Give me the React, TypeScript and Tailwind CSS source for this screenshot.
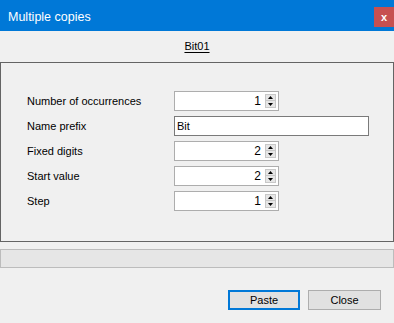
import React from "react";

const FONT = { fontFamily: '"Liberation Sans", Arial, sans-serif' };

const Spinner = () => (
  <div className="flex h-[14px] w-[11px] flex-col border border-[#c8c8c8] bg-[#e6e6e6]">
    <div className="flex h-1/2 items-center justify-center border-b border-[#c8c8c8]">
      <svg width="5" height="3" viewBox="0 0 5 3">
        <path d="M2.5 0 L5 3 L0 3 Z" fill="#000" />
      </svg>
    </div>
    <div className="flex h-1/2 items-center justify-center">
      <svg width="5" height="3" viewBox="0 0 5 3">
        <path d="M0 0 L5 0 L2.5 3 Z" fill="#000" />
      </svg>
    </div>
  </div>
);

const NumberField = ({ value }: { value: string }) => (
  <div className="flex h-[20px] w-[105px] items-center justify-end gap-[4px] border border-[#adadad] bg-white pr-[2px]">
    <span className="text-[12px] leading-none text-black">{value}</span>
    <Spinner />
  </div>
);

const ROWS = [
  { label: "Number of occurrences", value: "1" },
  { label: "Name prefix", text: "Bit" },
  { label: "Fixed digits", value: "2" },
  { label: "Start value", value: "2" },
  { label: "Step", value: "1" },
];

export default function App() {
  return (
    <div className="flex h-[323px] w-[394px] flex-col bg-[#f0f0f0]" style={FONT}>
      <div className="flex h-[31px] items-start justify-between bg-[#0078d7]">
        <span className="mt-[8px] pl-[8px] text-[12.5px] text-white">Multiple copies</span>
        <div className="mt-[7px] flex h-[20px] w-[20px] items-center justify-center bg-[#c75050] text-[11px] font-bold leading-none text-white">
          x
        </div>
      </div>

      <div className="flex h-[31px] items-center justify-center">
        <span className="text-[11px] text-black underline underline-offset-2">Bit01</span>
      </div>

      <div className="flex h-[180px] flex-col gap-[5px] border border-[#646464] pl-[26px] pt-[28px]">
        {ROWS.map((row) => (
          <div key={row.label} className="flex items-center">
            <span className="w-[147px] text-[11px] text-black">{row.label}</span>
            {row.text ? (
              <div className="flex h-[20px] w-[195px] items-center border border-[#7a7a7a] bg-white pl-[2px] text-[11px] text-black">
                {row.text}
              </div>
            ) : (
              <NumberField value={row.value!} />
            )}
          </div>
        ))}
      </div>

      <div className="mt-[7px] h-[19px] border border-[#bcbcbc] bg-[#e6e6e6]" />

      <div className="mt-[22px] flex justify-end gap-[8px] pr-[13px]">
        <button className="h-[20px] w-[72px] border-2 border-[#0078d7] bg-[#e1e1e1] text-[11px] leading-none text-black">
          Paste
        </button>
        <button className="h-[20px] w-[73px] border border-[#adadad] bg-[#e1e1e1] text-[11px] leading-none text-black">
          Close
        </button>
      </div>
    </div>
  );
}
